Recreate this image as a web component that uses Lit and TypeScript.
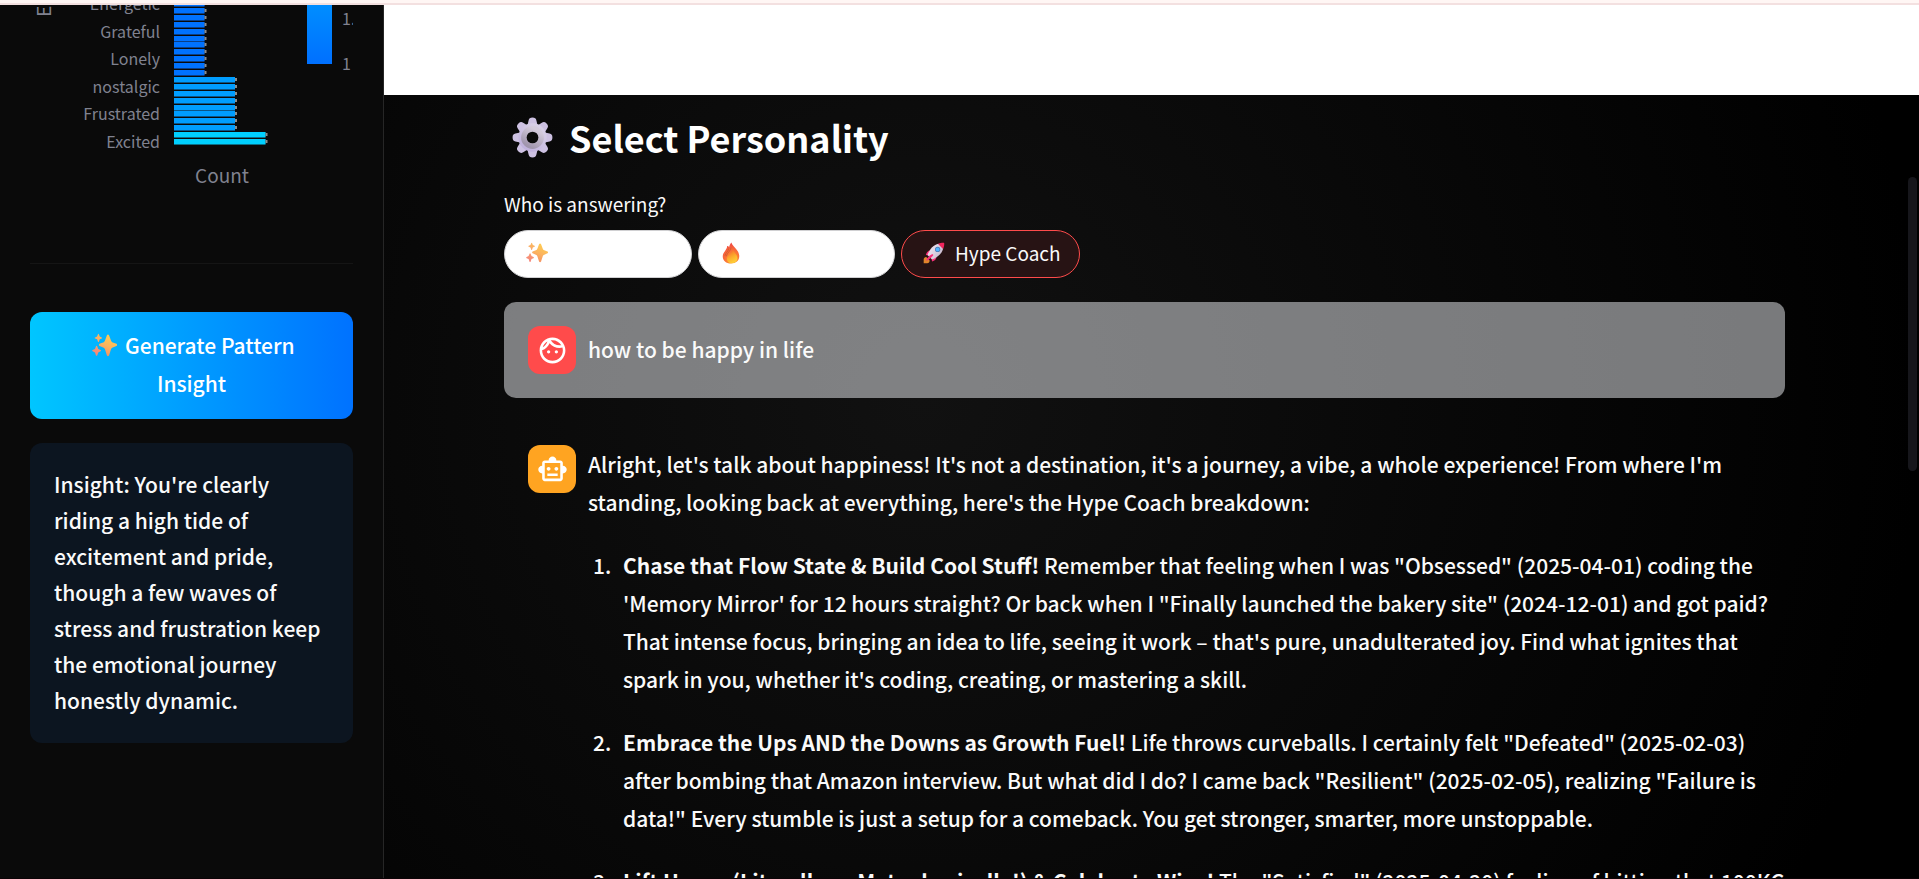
import { LitElement, html, svg, css } from "lit";
import { customElement, property, state } from "lit/decorators.js";
import { classMap } from "lit/directives/class-map.js";

const sparkles = html`<svg class="emoji" viewBox="0 0 32 32" aria-hidden="true">
  <defs>
    <linearGradient id="spark" x1="0.7" y1="0" x2="0.3" y2="1">
      <stop offset="0" stop-color="#ffcf4f" />
      <stop offset="0.55" stop-color="#fbb360" />
      <stop offset="1" stop-color="#f58b62" />
    </linearGradient>
    <linearGradient id="spark-small" x1="0.6" y1="0" x2="0.4" y2="1">
      <stop offset="0" stop-color="#fbbb60" />
      <stop offset="1" stop-color="#f5837c" />
    </linearGradient>
  </defs>
  <path fill="url(#spark)" d="M19 3.200c.9-1.600 2-1.600 2.900 0l2.500 6.600c.5 1.200 1 1.700 2.200 2.200l4.700 1.900c1 .6 1 2 0 2.600l-4.700 1.900c-1.200.5-1.700 1-2.200 2.200l-2.500 7.800c-.9 1.600-2 1.600-2.900 0l-2.500-7.800c-.5-1.200-1-1.700-2.200-2.200L9.600 16.500c-1-.6-1-2 0-2.600l4.700-1.900c1.200-.5 1.700-1 2.200-2.200z" />
  <path fill="url(#spark-small)" d="M7.500 1.800c.4-1 1-1 1.400 0l1 2.700 2.500 1.100c.8.400.8 1 0 1.400L9.900 8.100l-1 2.800c-.4 1-1 1-1.400 0l-1-2.800L4 7c-.8-.4-.8-1 0-1.400l2.500-1.100zM5 17.300c.5-1.100 1.300-1.100 1.800 0l1.200 3.200 2.900 1.300c.9.500.9 1.200 0 1.700L8 24.800l-1.200 3.600c-.5 1.100-1.300 1.100-1.800 0l-1.200-3.600-2.900-1.300c-.9-.5-.9-1.200 0-1.700l2.900-1.300z" />
</svg>`;

const flame = html`<svg class="emoji" viewBox="0 0 32 32" aria-hidden="true">
  <defs>
    <radialGradient id="fire" cx="0.6" cy="0.85" r="0.85">
      <stop offset="0" stop-color="#ffb52e" />
      <stop offset="0.45" stop-color="#fb7a35" />
      <stop offset="1" stop-color="#ef4444" />
    </radialGradient>
    <linearGradient id="fire-core" x1="0.3" y1="0" x2="0.7" y2="1">
      <stop offset="0" stop-color="#f6672f" />
      <stop offset="0.55" stop-color="#fcae2c" />
      <stop offset="1" stop-color="#ffd43a" />
    </linearGradient>
  </defs>
  <path fill="url(#fire)" d="M16.500.8c-2 2.500-3 4.800-3.200 7-.6-1-1.600-1.800-2.900-2.200.1 2.600-1 4.500-2.600 6.600C5.400 15.200 4 17.500 4 21c0 6 4.800 10.200 12 10.200S28 27 28 20.800c0-4.600-2.300-7.700-4.600-10.600C21 7.200 18 5 16.500.8z" />
  <path fill="url(#fire-core)" d="M18.600 10.500c.2 3.200-1.600 5-3.900 7.100-2.200 2-4.600 3.900-4.600 7 0 3.800 2.800 6.200 7.200 6.200 4.600 0 8-2.600 8-7.400 0-5.300-4.900-7.400-6.700-12.900z" />
  <path fill="none" stroke="#c9542f" stroke-width="1" d="M12.600 9.500c0 4-4.600 6-5.300 10.700M16 8c.3 4.500-5.800 7.500-7 13" />
</svg>`;

const rocket = html`<svg class="emoji" viewBox="0 0 32 32" aria-hidden="true">
  <defs>
    <linearGradient id="hull" x1="0" y1="0.2" x2="1" y2="0.8">
      <stop offset="0" stop-color="#f2eaf5" />
      <stop offset="1" stop-color="#c5b6cc" />
    </linearGradient>
  </defs>
  <path fill="#e0852b" d="M1 31v-5.500c0-2.300 1.600-3.600 3.600-3.600L9.700 27c0 2.300-1.300 4-3.600 4z" />
  <path fill="#f8307a" d="M10.500 12.500c-3 0-5.300 2.300-6.400 6.500l5.200.5zM19.600 21.500c0 3.200-2.200 5.900-6.500 7l-.6-5.300z" />
  <path fill="url(#hull)" d="M22.500 2.700c-6.600 1.500-12.500 7-16 16.300l6.600 6.600C22.300 22 27.900 16 29.300 9.500z" />
  <path fill="#f0255c" d="M22 2.800C25 1.400 28.200 1 30.200 1.200c.6.100.7.500.7.900.1 2-.3 5-1.700 7.900z" />
  <path fill="#f8307a" d="M13.500 17.300l1.700 1.700C13 22 10 25 5.500 27.300l-1-1C6.500 22.500 9.500 19.500 13.500 17.300z" />
  <circle cx="21.300" cy="10.800" r="3.800" fill="#4c7ab5" />
  <circle cx="21.300" cy="10.800" r="2.700" fill="#4fb4ff" />
</svg>`;

const gear = html`<svg class="gear" viewBox="0 0 42 42" aria-hidden="true">
  <defs>
    <linearGradient id="teeth" x1="1" y1="0" x2="0.3" y2="1">
      <stop offset="0" stop-color="#ded7e8" />
      <stop offset="1" stop-color="#bfb0dd" />
    </linearGradient>
    <linearGradient id="hub" x1="0.8" y1="0.1" x2="0.3" y2="1">
      <stop offset="0" stop-color="#d3cadb" />
      <stop offset="1" stop-color="#a196ae" />
    </linearGradient>
  </defs>
  <g fill="#cdc1e2">
    ${[0, 45, 90, 135, 180, 225, 270, 315].map(
      (a) => svg`<path transform="rotate(${a} 21 21)" d="M15 12 17 3.500c.4-2 1.600-2.900 4-2.900s3.600.9 4 2.900l2 8.500z" />`
    )}
  </g>
  <circle cx="21" cy="21" r="14.500" fill="url(#teeth)" />
  <circle cx="21" cy="21" r="8.700" fill="none" stroke="url(#hub)" stroke-width="6" />
  <circle cx="21" cy="21" r="6" fill="#0a0a0a" />
</svg>`;

const facePath =
  "M10.250 13c0 .69-.56 1.250-1.250 1.250S7.750 13.690 7.750 13s.56-1.250 1.250-1.250 1.250.56 1.250 1.250zM15 11.750c-.69 0-1.250.56-1.250 1.250s.56 1.250 1.250 1.250 1.250-.56 1.250-1.250-.56-1.250-1.250-1.250zm7 .25c0 5.520-4.480 10-10 10S2 17.520 2 12 6.480 2 12 2s10 4.480 10 10zM10.660 4.120C12.060 6.440 14.600 8 17.500 8c.46 0 .91-.05 1.340-.12C17.440 5.560 14.900 4 12 4c-.46 0-.91.05-1.340.12zM4.420 9.470c1.710-.97 3.030-2.550 3.660-4.440C6.370 6 5.050 7.580 4.420 9.470zM20 12c0-.78-.12-1.530-.33-2.240-.7.150-1.420.240-2.170.240-3.130 0-5.920-1.440-7.760-3.690C8.690 8.870 6.600 10.880 4 11.860c.01.04 0 .09 0 .14 0 4.420 3.580 8 8 8s8-3.580 8-8z";
const botPath =
  "M20 9V7c0-1.100-.9-2-2-2h-3c0-1.660-1.340-3-3-3S9 3.340 9 5H6c-1.100 0-2 .9-2 2v2c-1.660 0-3 1.340-3 3s1.340 3 3 3v4c0 1.100.9 2 2 2h12c1.100 0 2-.9 2-2v-4c1.660 0 3-1.340 3-3s-1.340-3-3-3zm-2 10H6V7h12v12zm-9-6c-.83 0-1.500-.67-1.500-1.500S8.170 10 9 10s1.500.67 1.500 1.500S9.830 13 9 13zm7.500-1.500c0 .83-.67 1.500-1.500 1.500s-1.500-.67-1.500-1.500.67-1.500 1.500-1.500 1.500.67 1.500 1.500zM8 15h8v2H8v-2z";

@customElement("emotion-chart")
export class EmotionChart extends LitElement {
  static styles = css`
    :host { display: block; }
    svg { display: block; width: 323px; height: 210px; }
    text { fill: #808290; font-size: 16px; font-weight: 400; }
    .axis { font-size: 19px; }
    .labels { text-anchor: end; }
    .mid { text-anchor: middle; }
  `;

  // Bars from the bottom of the plot upwards.
  private counts = [3, 3, ...Array(8).fill(2), ...Array(11).fill(1)];
  private labels = ["Excited", "Frustrated", "nostalgic", "Lonely", "Grateful", "Energetic"];
  private colors: Record<number, [string, string]> = {
    1: ["#0072ff", "#0a3f86"],
    2: ["#009dff", "#0a5688"],
    3: ["#00d0ff", "#0a7088"],
  };

  render() {
    const pitch = 6.9;
    return html`<svg viewBox="30 5 323 210" role="img" aria-label="Emotion counts">
      <defs>
        <linearGradient id="scale" x1="0" y1="0" x2="0" y2="1">
          <stop offset="0" stop-color="#0090ff" />
          <stop offset="1" stop-color="#0070ff" />
        </linearGradient>
      </defs>
      ${this.counts.map((n, i) => {
        const y = Math.round(139 - i * pitch);
        const w = n * 30.5;
        const [fill, edge] = this.colors[n];
        return svg`<rect x="174" y=${y} width=${w} height="6" fill=${edge} />
          <rect x="174" y=${y} width=${w} height="5" fill=${fill} />
          <rect x=${174 + w} y=${y + 1} width="2" height="3" fill="#8b8b8b" />`;
      })}
      <g class="labels">
        ${this.labels.map((t, i) => svg`<text x="160" y=${Math.round(148 - i * pitch * 4)}>${t}</text>`)}
      </g>
      <text class="axis mid" x="222" y="183">Count</text>
      <text class="axis" transform="translate(51 17) rotate(-90)">E</text>
      <rect x="307" y="0" width="25" height="64" fill="url(#scale)" />
      <text x="342" y="25">1.</text>
      <text x="342" y="70">1</text>
    </svg>`;
  }
}

@customElement("chat-message")
export class ChatMessage extends LitElement {
  @property({ reflect: true }) role: "user" | "assistant" = "user";

  static styles = css`
    :host { display: grid; grid-template-columns: 48px minmax(0, 1fr); column-gap: 12px; padding: 24px 0 24px 24px; border-radius: 12px; }
    :host([role="user"]) { background: rgba(240, 242, 246, 0.5); }
    .avatar { display: grid; place-items: center; width: 48px; height: 48px; border-radius: 12px; background: #ff4b4b; }
    :host([role="assistant"]) .avatar { background: #ffa421; }
    :host([role="user"]) .body { padding-top: 4px; }
    svg { width: 31px; height: 31px; fill: #fff; }
  `;

  render() {
    return html`<div class="avatar">
        <svg viewBox="0 0 24 24" aria-hidden="true"><path d=${this.role === "user" ? facePath : botPath} /></svg>
      </div>
      <div class="body"><slot></slot></div>`;
  }
}

@customElement("app-root")
export class AppRoot extends LitElement {
  @state() private persona = "coach";

  private personas = [
    { id: "sparkle", name: "", hint: "Sparkle persona", icon: sparkles },
    { id: "flame", name: "", hint: "Flame persona", icon: flame },
    { id: "coach", name: "Hype Coach", hint: "Hype Coach", icon: rocket },
  ];

  static styles = css`
    :host { display: flex; flex-direction: column; position: relative; box-sizing: border-box; height: 100vh; overflow: hidden; background: #000; color: #fafafa; border-bottom: 1px solid #0b0306; font: 500 21px/38px "Noto Sans CJK SC", "Noto Sans", sans-serif; }
    .strip { flex: none; box-sizing: border-box; height: 5px; background: #fff6f4; border-bottom: 2px solid #f3e0e0; }
    .shell { flex: 1; min-height: 0; display: grid; grid-template-columns: 384px minmax(0, 1fr); }
    aside { box-sizing: border-box; padding: 0 30px; background: #0a0a0a; border-right: 1px solid #262626; overflow: hidden; }
    hr { margin: 48px 0; border: 0; height: 1px; background: #151515; }
    button { font: inherit; color: inherit; cursor: pointer; }
    .generate { display: block; width: 100%; padding: 14px 32px 17px; border: 0; border-radius: 12px; background: linear-gradient(90deg, #00c6ff, #0072ff); color: #fff; }
    .generate .emoji { width: 25px; height: 25px; margin: 0 3px 0 4px; vertical-align: -4px; }
    .insight { margin: 24px 0 0; padding: 23px 24px 25px; border-radius: 12px; background: #0c1520; line-height: 36px; }
    main { display: flex; flex-direction: column; min-height: 0; overflow: hidden; background: radial-gradient(circle 1000px at 35% 45%, #111, #000); }
    header { flex: none; height: 90px; background: #fff; }
    .content { flex: 1; min-height: 0; padding: 14px 134px 0 120px; overflow: hidden; }
    h2 { display: flex; align-items: center; gap: 16px; margin: 0 0 25px; padding-left: 8px; font-size: 36px; line-height: 56px; font-weight: 700; color: #fff; }
    .gear { width: 41px; height: 41px; }
    .label { font-size: 19px; font-weight: 400; line-height: 28px; margin-bottom: 12px; }
    .pills { display: flex; gap: 6px; margin-bottom: 24px; }
    .pill { display: flex; align-items: center; gap: 10px; box-sizing: border-box; height: 48px; padding: 0 18px 2px 21px; border: 1px solid #d0d0d2; border-radius: 24px; background: #fff; font-size: 19px; font-weight: 400; line-height: 28px; color: #fff; }
    .pill .emoji { width: 22px; height: 22px; }
    .sparkle { width: 188px; }
    .flame { width: 197px; }
    .active { border-color: #ff4b4b; background: #271314; color: #fafafa; }
    p { margin: 0; }
    .log { display: grid; gap: 23px; }
    ol { display: grid; gap: 25px; margin: 25px 0 0; padding-left: 28px; }
    li { padding-left: 7px; }
    b { font-weight: 700; }
    .thumb { position: absolute; right: 2px; top: 177px; width: 9px; height: 294px; border-radius: 5px; background: #16161b; }
  `;

  render() {
    return html`
      <div class="strip"></div>
      <div class="shell">
        <aside>
          <emotion-chart></emotion-chart>
          <hr />
          <button class="generate">${sparkles} Generate Pattern Insight</button>
          <p class="insight">Insight: You're clearly riding a high tide of excitement and pride, though a few waves of stress and frustration keep the emotional journey honestly dynamic.</p>
        </aside>
        <main>
          <header></header>
          <div class="content">
            <h2>${gear}<span>Select Personality</span></h2>
            <div class="label" id="who">Who is answering?</div>
            <div class="pills" role="group" aria-labelledby="who">
              ${this.personas.map(
                (p) => html`<button
                  class=${classMap({ pill: true, [p.id]: true, active: this.persona === p.id })}
                  aria-label=${p.hint}
                  aria-pressed=${this.persona === p.id}
                  @click=${() => (this.persona = p.id)}
                >${p.icon}${p.name}</button>`
              )}
            </div>
            <div class="log">
              <chat-message role="user"><p>how to be happy in life</p></chat-message>
              <chat-message role="assistant">
                <p>Alright, let's talk about happiness! It's not a destination, it's a journey, a vibe, a whole experience! From where I'm standing, looking back at everything, here's the Hype Coach breakdown:</p>
                <ol>
                  <li><b>Chase that Flow State &amp; Build Cool Stuff!</b> Remember that feeling when I was "Obsessed" (2025-04-01) coding the 'Memory Mirror' for 12 hours straight? Or back when I "Finally launched the bakery site" (2024-12-01) and got paid? That intense focus, bringing an idea to life, seeing it work – that's pure, unadulterated joy. Find what ignites that spark in you, whether it's coding, creating, or mastering a skill.</li>
                  <li><b>Embrace the Ups AND the Downs as Growth Fuel!</b> Life throws curveballs. I certainly felt "Defeated" (2025-02-03) after bombing that Amazon interview. But what did I do? I came back "Resilient" (2025-02-05), realizing "Failure is data!" Every stumble is just a setup for a comeback. You get stronger, smarter, more unstoppable.</li>
                  <li><b>Lift Heavy (Literally or Metaphorically!) &amp; Celebrate Wins!</b> The "Satisfied" (2025-04-20) feeling of hitting that 100KG</li>
                </ol>
              </chat-message>
            </div>
          </div>
        </main>
      </div>
      <div class="thumb"></div>
    `;
  }
}
